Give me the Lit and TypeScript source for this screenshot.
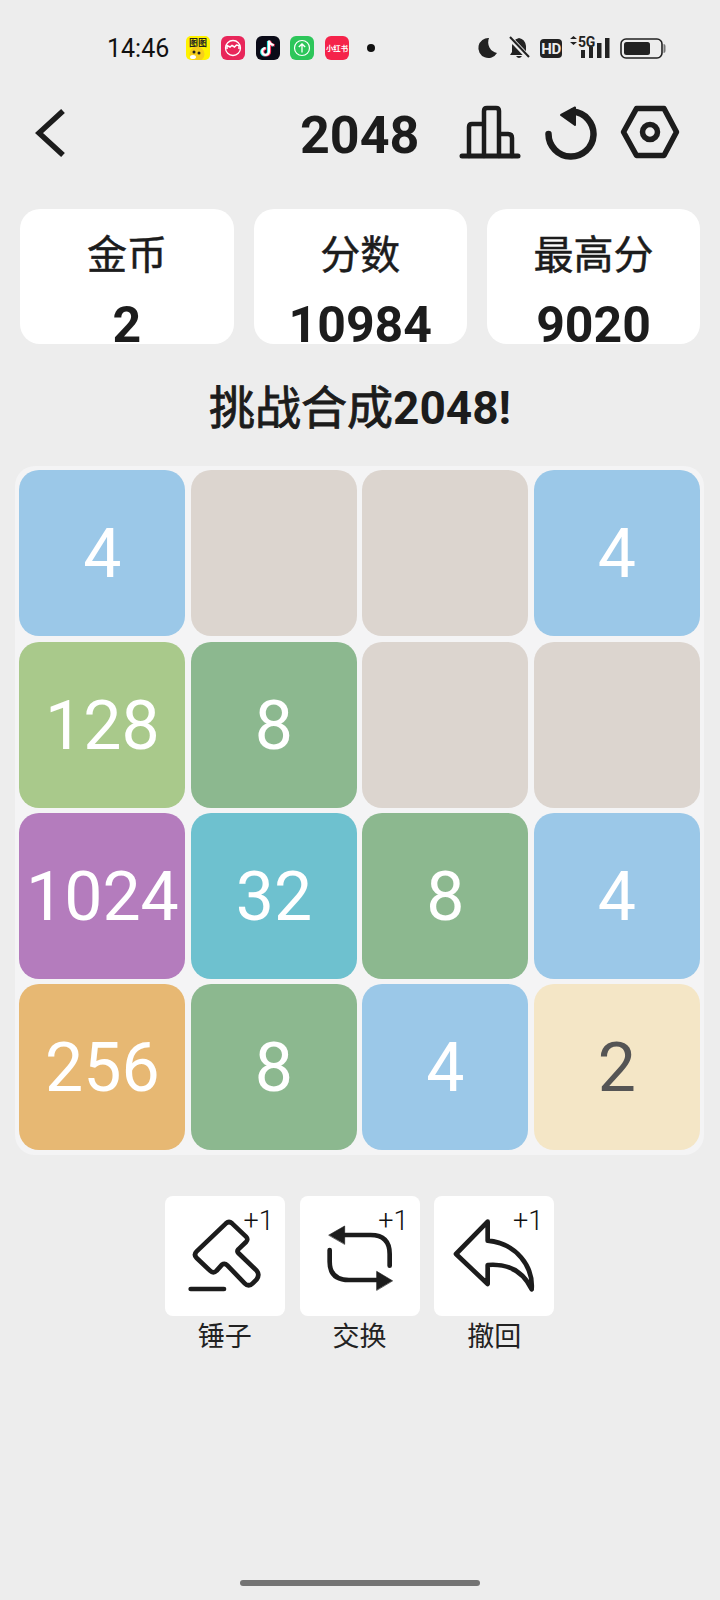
import {LitElement, html, svg, css} from 'lit';
import {customElement} from 'lit/decorators.js';

const BOARD = [
    [4, 0, 0, 4],
    [128, 8, 0, 0],
    [1024, 32, 8, 4],
    [256, 8, 4, 2],
];

const TOOLS = [
    {
        label: '锤子',
        box: '45 48 360 360',
        icon: svg`
            <path d="M228 130 Q237 122 246 130 L288 170 Q296 178 288 186 L265 208 Q260 214 265 219 L320 272 Q330 284 320 298 L308 310 Q296 322 284 310 L232 256 Q224 248 216 254 L200 272 Q190 282 180 272 L140 234 Q130 224 140 214 Z"></path>
            <path d="M122 327 H222"></path>
        `,
    },
    {
        label: '交换',
        box: '448 48 360 360',
        icon: svg`
            <path d="M580 165 H660 Q717 165 717 222 V257"></path>
            <path d="M537 210 V245 Q537 300 595 300 H682"></path>
            <path class="solid" d="M535 165 L582 138 V192 Z"></path>
            <path class="solid" d="M725 302 L678 274 V330 Z"></path>
        `,
    },
    {
        label: '撤回',
        box: '852 48 360 360',
        icon: svg`
            <path d="M1013 125 L918 222 L1013 312 V255 C1075 250 1120 275 1145 328 C1150 260 1100 190 1013 182 Z"></path>
        `,
    },
];

@customElement('app-root')
export class AppRoot extends LitElement {
    static styles = css`
        :host {
            display: flex;
            flex-direction: column;
            width: 720px;
            height: 1600px;
            background: #ededed;
            color: #1c1c1c;
            font-family: Roboto, "Noto Sans CJK SC", sans-serif;
        }

        svg {
            display: block;
            flex: none;
        }

        .status {
            display: flex;
            align-items: center;
            height: 96px;
            padding-left: 107px;
            box-sizing: border-box;
        }

        .time {
            width: 79px;
            font-size: 25px;
            color: #111;
        }

        .apps {
            display: flex;
            gap: 10.8px;
        }

        .dot {
            width: 8px;
            height: 8px;
            margin-left: 18px;
            border-radius: 50%;
            background: #111;
        }

        .sys {
            margin-left: auto;
            margin-right: 51px;
        }

        .sys text {
            font-family: Roboto, sans-serif;
            font-weight: 700;
        }

        .bar {
            display: flex;
            align-items: center;
            height: 56px;
            margin-top: 8px;
            padding: 0 39px 0 35px;
        }

        .bar svg {
            fill: none;
            stroke: #1c1c1c;
            stroke-linecap: round;
            stroke-linejoin: round;
        }

        .title {
            margin: 6px 0 0 233px;
            font-size: 52px;
            font-weight: 700;
        }

        .actions {
            display: flex;
            gap: 21.5px;
            margin-left: auto;
        }

        .stats {
            display: grid;
            grid-template-columns: repeat(3, 213.3px);
            gap: 20px;
            margin-top: 49px;
            padding-left: 20.3px;
        }

        .stat {
            display: flex;
            flex-direction: column;
            align-items: center;
            height: 135px;
            background: #fff;
            border-radius: 20px;
        }

        .stat-label {
            margin-top: 24px;
            font-size: 40px;
            line-height: 46px;
            -webkit-text-stroke: 0.5px #1c1c1c;
        }

        .stat-value {
            margin-top: 21px;
            font-size: 50px;
            font-weight: 700;
            line-height: 50px;
        }

        .message {
            margin-top: 38px;
            font-size: 46px;
            font-weight: 700;
            line-height: 52px;
            text-align: center;
        }

        .message span {
            font-weight: 400;
            -webkit-text-stroke: 0.9px #1c1c1c;
        }

        .board {
            display: grid;
            grid-template-columns: repeat(4, 166px);
            grid-auto-rows: 166px;
            gap: 5.35px 5.5px;
            width: 689px;
            margin: 32px 0 0 15px;
            padding: 4.4px;
            box-sizing: border-box;
            background: #f4f4f5;
            border-radius: 20px;
        }

        .tile {
            display: flex;
            align-items: center;
            justify-content: center;
            padding-top: 2px;
            box-sizing: border-box;
            font-size: 68px;
            color: #fff;
            border-radius: 20px;
        }

        .t0 { background: #dcd5cf; }
        .t2 { background: #f4e6c6; color: #555; }
        .t4 { background: #9bc8e8; }
        .t8 { background: #8cb88f; }
        .t32 { background: #6ec1cf; }
        .t128 { background: #a9c98b; }
        .t256 { background: #e7b873; }
        .t1024 { background: #b47cbd; }

        .tools {
            display: flex;
            justify-content: center;
            gap: 14.7px;
            margin: 41px 1px 0 0;
        }

        .tool {
            display: flex;
            flex-direction: column;
            align-items: center;
            width: 120px;
        }

        .tool-box {
            position: relative;
            width: 120px;
            height: 120px;
            background: #fff;
            border-radius: 8px;
        }

        .tool-box svg {
            fill: none;
            stroke: #1c1c1c;
            stroke-width: 14;
            stroke-linecap: round;
            stroke-linejoin: round;
        }

        .tool-box .solid {
            fill: #1c1c1c;
            stroke-width: 2;
        }

        .plus {
            position: absolute;
            top: 10px;
            right: 11px;
            font-size: 27px;
            font-weight: 300;
            line-height: 30px;
            color: #111;
        }

        .tool-label {
            margin-top: 4px;
            font-size: 27px;
            line-height: 34px;
            color: #222;
        }

        .home {
            width: 240px;
            height: 6px;
            margin: auto auto 14px;
            background: #747474;
            border-radius: 3px;
        }
    `;

    renderApps() {
        return html`
            <div class="apps">
                <svg width="24" height="24" viewBox="0 0 24 24">
                    <rect width="24" height="24" rx="5" fill="#fff200"></rect>
                    <text x="12" y="10" font-size="9" font-weight="700" text-anchor="middle" fill="#222" font-family="Noto Sans CJK SC">图图</text>
                    <circle cx="11" cy="18" r="7.5" fill="#f7cf1b"></circle>
                    <circle cx="8" cy="16" r="1.5" fill="#222"></circle>
                    <circle cx="13" cy="17" r="1.5" fill="#222"></circle>
                    <ellipse cx="7" cy="21" rx="3" ry="2" fill="#fff"></ellipse>
                </svg>
                <svg width="24" height="24" viewBox="0 0 24 24">
                    <rect width="24" height="24" rx="6" fill="#e8265a"></rect>
                    <circle cx="12" cy="12" r="7.5" fill="none" stroke="#fff" stroke-width="1.3"></circle>
                    <path d="M6 13 V9.5 L9 11 L11 9.5 L13.5 11 L15.5 9 L18 9.5 V13" fill="none" stroke="#fff" stroke-width="1.5"></path>
                </svg>
                <svg width="24" height="24" viewBox="0 0 24 24">
                    <rect width="24" height="24" rx="6" fill="#0b0b18"></rect>
                    <path d="M13 4.5 V15.5 A3.4 3.4 0 1 1 9.6 12.1 M13 4.5 Q13.6 8.5 17.8 9" fill="none" stroke="#25f4ee" stroke-width="2.6" transform="translate(-.8 .4)"></path>
                    <path d="M13 4.5 V15.5 A3.4 3.4 0 1 1 9.6 12.1 M13 4.5 Q13.6 8.5 17.8 9" fill="none" stroke="#fe2c55" stroke-width="2.6" transform="translate(.8 .4)"></path>
                    <path d="M13 4.5 V15.5 A3.4 3.4 0 1 1 9.6 12.1 M13 4.5 Q13.6 8.5 17.8 9" fill="none" stroke="#fff" stroke-width="2.2"></path>
                </svg>
                <svg width="24" height="24" viewBox="0 0 24 24">
                    <rect width="24" height="24" rx="6" fill="#2dc65a"></rect>
                    <circle cx="12" cy="12" r="7.5" fill="none" stroke="#fff" stroke-width="1.2"></circle>
                    <path d="M12 16.5 V8 M8.8 11 L12 8 L15.2 11" fill="none" stroke="#fff" stroke-width="1.3"></path>
                </svg>
                <svg width="24" height="24" viewBox="0 0 24 24">
                    <rect width="24" height="24" rx="6" fill="#f5234a"></rect>
                    <text x="12" y="15" font-size="7.4" font-weight="700" text-anchor="middle" fill="#fff" font-family="Noto Sans CJK SC">小红书</text>
                </svg>
            </div>
        `;
    }

    renderSys() {
        return html`
            <svg class="sys" width="194" height="28" viewBox="475 34 194 28">
                <path d="M489 38 A10 10 0 1 0 497 53 A11 11 0 0 1 489 38 Z" fill="#222"></path>
                <path d="M519 38 Q525 39 526 46 V52 L529 55 H510 L512 52 V46 Q512 40 519 38 Z M516 56 H522 Q519 60 516 56 Z" fill="#222"></path>
                <path d="M510 38 L529 58" stroke="#ededed" stroke-width="5"></path>
                <path d="M510 37 L529 57" stroke="#222" stroke-width="2"></path>
                <rect x="540" y="39" width="22" height="19" rx="4" fill="#222"></rect>
                <text x="551" y="54" font-size="15" letter-spacing="-.5" text-anchor="middle" fill="#ededed">HD</text>
                <path d="M570 39 L573.5 36 L577 39 Z M570 42 L573.5 45 L577 42 Z" fill="#222"></path>
                <text x="578" y="47" font-size="14" letter-spacing="-.4" fill="#222">5G</text>
                <rect x="581" y="50" width="4" height="8" fill="#222"></rect>
                <rect x="589" y="47" width="4" height="11" fill="#222"></rect>
                <rect x="597" y="43" width="4.5" height="15" fill="#222"></rect>
                <rect x="605" y="38" width="4.5" height="20" fill="#222"></rect>
                <rect x="621" y="39" width="41" height="19" rx="5" fill="none" stroke="#222" stroke-width="1.6"></rect>
                <rect x="624" y="42" width="26" height="13" rx="2.5" fill="#222"></rect>
                <path d="M663.5 44 Q665.5 44 665.5 46 V51 Q665.5 53 663.5 53 Z" fill="#777"></path>
            </svg>
        `;
    }

    renderBar() {
        return html`
            <div class="bar">
                <svg width="32" height="56" viewBox="34 104 32 56" stroke-width="5.5">
                    <path d="M62 111 L38 133 L62 155" stroke-linecap="butt" stroke-linejoin="miter"></path>
                </svg>
                <div class="title">2048</div>
                <div class="actions">
                    <svg width="64" height="56" viewBox="458 104 64 56" stroke-width="4.5">
                        <path d="M469 156 V127 Q469 124 472 124 H484 M484 156 V111 Q484 108 487 108 H496 Q499 108 499 111 V156 M499 134 H508 Q512 134 512 138 V156"></path>
                        <path d="M462 156 H518" stroke-width="5"></path>
                    </svg>
                    <svg width="54" height="56" viewBox="543 104 54 56" stroke-width="6.5">
                        <path d="M547.5 134 A22.5 22.5 0 1 0 572 111.6"></path>
                        <path d="M560 115 L574 107.5 V125 Z" fill="#1c1c1c" stroke-width="2"></path>
                    </svg>
                    <svg width="62" height="56" viewBox="619 104 62 56" stroke-width="5.5">
                        <path d="M623.5 132 L636.5 108.5 H664 L676.5 132 L664 155.5 H636.5 Z"></path>
                        <circle cx="650" cy="132" r="7.5"></circle>
                    </svg>
                </div>
            </div>
        `;
    }

    render() {
        return html`
            <div class="status">
                <div class="time">14:46</div>
                ${this.renderApps()}
                <div class="dot"></div>
                ${this.renderSys()}
            </div>
            ${this.renderBar()}
            <div class="stats">
                <div class="stat"><div class="stat-label">金币</div><div class="stat-value">2</div></div>
                <div class="stat"><div class="stat-label">分数</div><div class="stat-value">10984</div></div>
                <div class="stat"><div class="stat-label">最高分</div><div class="stat-value">9020</div></div>
            </div>
            <div class="message"><span>挑战合成</span>2048!</div>
            <div class="board">
                ${BOARD.flat().map((n) => html`<div class="tile t${n}">${n || ''}</div>`)}
            </div>
            <div class="tools">
                ${TOOLS.map((t) => html`
                    <div class="tool">
                        <div class="tool-box">
                            <svg width="120" height="120" viewBox="${t.box}">${t.icon}</svg>
                            <div class="plus">+1</div>
                        </div>
                        <div class="tool-label">${t.label}</div>
                    </div>
                `)}
            </div>
            <div class="home"></div>
        `;
    }
}
